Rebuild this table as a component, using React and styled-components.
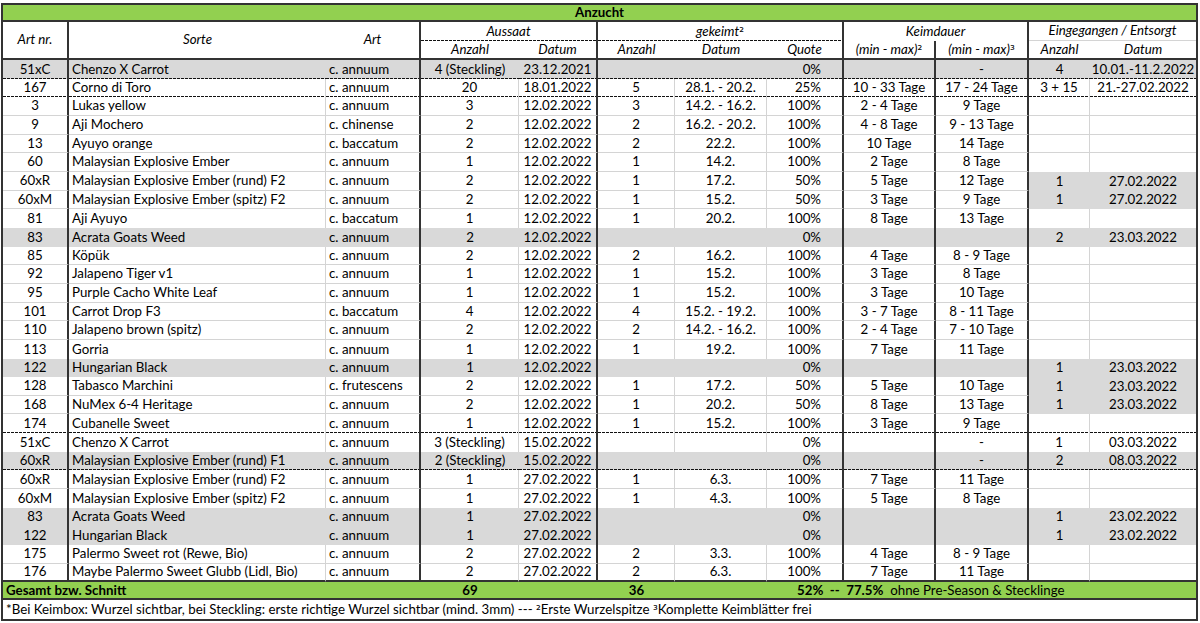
import React from "react";
import styled, { createGlobalStyle, css } from "styled-components";

const GREEN = "#92d050";
const GRAY = "#d9d9d9";
const GRID = "#d4d4d4";
const DARK = "#333333";

const GlobalStyle = createGlobalStyle`
  html, body { margin: 0; padding: 0; background: #fff; }
  body {
    font-family: Lato, "Noto Sans", "Liberation Sans", sans-serif;
    font-size: 13.3px;
    color: #000;
  }
`;

const COLS = [66, 257, 95, 98, 79, 77, 92, 77, 92, 93, 61, 106];
const RIGHT = ["dark", "light", "dark", "light", "dark", "light", "light", "dark", "dark", "dark", "light", "none"];
const ALIGN = ["center", "left", "left", "center", "center", "center", "center", "right", "center", "center", "center", "center"];

const Sheet = styled.div`
  margin: 3px 0 0 1px;
  width: 1197px;
  box-sizing: border-box;
  border: 2px solid ${DARK};
  display: grid;
  grid-template-columns: ${COLS.map((c) => `${c}px`).join(" ")};
  grid-template-rows: 17px 19px 19px repeat(28, 18.67px) 18px 19px;
`;

const justify = { left: "flex-start", center: "center", right: "flex-end" };

const lineFor = (kind) => {
  if (kind === "dark") return `2px solid ${DARK}`;
  if (kind === "light") return `1px solid ${GRID}`;
  return "0 none";
};

const Cell = styled.div`
  box-sizing: border-box;
  display: flex;
  align-items: center;
  justify-content: ${(p) => justify[p.$align || "center"]};
  padding: 0 ${(p) => (p.$padR != null ? p.$padR : 3)}px 0 ${(p) => (p.$padL != null ? p.$padL : 3)}px;
  white-space: pre;
  line-height: 1;
  min-width: 0;
  background-color: ${(p) => (p.$bg === "gray" ? GRAY : p.$bg === "green" ? GREEN : "#fff")};
  border-right: ${(p) => lineFor(p.$right)};
  border-bottom: ${(p) => lineFor(p.$bottom)};
  font-style: ${(p) => (p.$italic ? "italic" : "normal")};
  font-weight: ${(p) => (p.$bold ? 700 : 400)};
  ${(p) => p.$span && css`grid-column: span ${p.$span};`}
  ${(p) => p.$rowSpan && css`grid-row: span ${p.$rowSpan};`}
  ${(p) =>
    p.$dashed &&
    css`
      background-image: linear-gradient(to right, #111 0 3px, transparent 3px 4px);
      background-size: 4px 1px;
      background-repeat: repeat-x;
      background-position: left bottom;
    `}
`;

const Bold = styled.span`
  font-weight: 700;
`;

const Sup = styled.span`
  font-family: "DejaVu Sans", "Noto Sans", sans-serif;
  font-size: 12px;
  font-style: normal;
`;

const ROWS = [
  { v: ["51xC", "Chenzo X Carrot", "c. annuum", "4 (Steckling)", "23.12.2021", "", "", "0%", "", "-", "4", "10.01.-11.2.2022"], g: "full", b: "dashed" },
  { v: ["167", "Corno di Toro", "c. annuum", "20", "18.01.2022", "5", "28.1. - 20.2.", "25%", "10 - 33 Tage", "17 - 24 Tage", "3 + 15", "21.-27.02.2022"], b: "dashed" },
  { v: ["3", "Lukas yellow", "c. annuum", "3", "12.02.2022", "3", "14.2. - 16.2.", "100%", "2 - 4 Tage", "9 Tage", "", ""] },
  { v: ["9", "Aji Mochero", "c. chinense", "2", "12.02.2022", "2", "16.2. - 20.2.", "100%", "4 - 8 Tage", "9 - 13 Tage", "", ""] },
  { v: ["13", "Ayuyo orange", "c. baccatum", "2", "12.02.2022", "2", "22.2.", "100%", "10 Tage", "14 Tage", "", ""] },
  { v: ["60", "Malaysian Explosive Ember", "c. annuum", "1", "12.02.2022", "1", "14.2.", "100%", "2 Tage", "8 Tage", "", ""] },
  { v: ["60xR", "Malaysian Explosive Ember (rund) F2", "c. annuum", "2", "12.02.2022", "1", "17.2.", "50%", "5 Tage", "12 Tage", "1", "27.02.2022"], g: "end" },
  { v: ["60xM", "Malaysian Explosive Ember (spitz) F2", "c. annuum", "2", "12.02.2022", "1", "15.2.", "50%", "3 Tage", "9 Tage", "1", "27.02.2022"], g: "end" },
  { v: ["81", "Aji Ayuyo", "c. baccatum", "1", "12.02.2022", "1", "20.2.", "100%", "8 Tage", "13 Tage", "", ""] },
  { v: ["83", "Acrata Goats Weed", "c. annuum", "2", "12.02.2022", "", "", "0%", "", "", "2", "23.03.2022"], g: "full" },
  { v: ["85", "Köpük", "c. annuum", "2", "12.02.2022", "2", "16.2.", "100%", "4 Tage", "8 - 9 Tage", "", ""] },
  { v: ["92", "Jalapeno Tiger v1", "c. annuum", "1", "12.02.2022", "1", "15.2.", "100%", "3 Tage", "8 Tage", "", ""] },
  { v: ["95", "Purple Cacho White Leaf", "c. annuum", "1", "12.02.2022", "1", "15.2.", "100%", "3 Tage", "10 Tage", "", ""] },
  { v: ["101", "Carrot Drop F3", "c. baccatum", "4", "12.02.2022", "4", "15.2. - 19.2.", "100%", "3 - 7 Tage", "8 - 11 Tage", "", ""] },
  { v: ["110", "Jalapeno brown (spitz)", "c. annuum", "2", "12.02.2022", "2", "14.2. - 16.2.", "100%", "2 - 4 Tage", "7 - 10 Tage", "", ""] },
  { v: ["113", "Gorria", "c. annuum", "1", "12.02.2022", "1", "19.2.", "100%", "7 Tage", "11 Tage", "", ""] },
  { v: ["122", "Hungarian Black", "c. annuum", "1", "12.02.2022", "", "", "0%", "", "", "1", "23.03.2022"], g: "full" },
  { v: ["128", "Tabasco Marchini", "c. frutescens", "2", "12.02.2022", "1", "17.2.", "50%", "5 Tage", "10 Tage", "1", "23.03.2022"], g: "end" },
  { v: ["168", "NuMex 6-4 Heritage", "c. annuum", "2", "12.02.2022", "1", "20.2.", "50%", "8 Tage", "13 Tage", "1", "23.03.2022"], g: "end" },
  { v: ["174", "Cubanelle Sweet", "c. annuum", "1", "12.02.2022", "1", "15.2.", "100%", "3 Tage", "9 Tage", "", ""], b: "dashed" },
  { v: ["51xC", "Chenzo X Carrot", "c. annuum", "3 (Steckling)", "15.02.2022", "", "", "0%", "", "-", "1", "03.03.2022"] },
  { v: ["60xR", "Malaysian Explosive Ember (rund) F1", "c. annuum", "2 (Steckling)", "15.02.2022", "", "", "0%", "", "-", "2", "08.03.2022"], g: "full", b: "dashed" },
  { v: ["60xR", "Malaysian Explosive Ember (rund) F2", "c. annuum", "1", "27.02.2022", "1", "6.3.", "100%", "7 Tage", "11 Tage", "", ""] },
  { v: ["60xM", "Malaysian Explosive Ember (spitz) F2", "c. annuum", "1", "27.02.2022", "1", "4.3.", "100%", "5 Tage", "8 Tage", "", ""] },
  { v: ["83", "Acrata Goats Weed", "c. annuum", "1", "27.02.2022", "", "", "0%", "", "", "1", "23.02.2022"], g: "full" },
  { v: ["122", "Hungarian Black", "c. annuum", "1", "27.02.2022", "", "", "0%", "", "", "1", "23.02.2022"], g: "full" },
  { v: ["175", "Palermo Sweet rot (Rewe, Bio)", "c. annuum", "2", "27.02.2022", "2", "3.3.", "100%", "4 Tage", "8 - 9 Tage", "", ""] },
  { v: ["176", "Maybe Palermo Sweet Glubb (Lidl, Bio)", "c. annuum", "2", "27.02.2022", "2", "6.3.", "100%", "7 Tage", "11 Tage", "", ""] },
];

const isGray = (i, c) => {
  const r = ROWS[i];
  if (!r || c > 11) return false;
  if (r.g === "full") return true;
  if (r.g === "end") return c >= 10;
  return false;
};

function DataRow({ row, i }) {
  const last = i === ROWS.length - 1;
  return row.v.map((val, c) => {
    const gray = isGray(i, c);
    let right = RIGHT[c];
    if (right === "light" && (gray || isGray(i, c + 1))) right = "none";
    let bottom = "light";
    let dashed = false;
    if (row.b === "dashed") {
      bottom = "none";
      dashed = true;
    } else if (last) bottom = "dark";
    else if (gray || isGray(i + 1, c)) bottom = "none";
    return (
      <Cell
        key={c}
        $align={ALIGN[c]}
        $bg={gray ? "gray" : "white"}
        $right={right}
        $bottom={bottom}
        $dashed={dashed}
        $padR={c === 7 ? 21 : 3}
      >
        {val}
      </Cell>
    );
  });
}

export default function App() {
  return (
    <>
      <GlobalStyle />
      <Sheet>
        <Cell $span={12} $bg="green" $bold $bottom="dark">Anzucht</Cell>

        <Cell $rowSpan={2} $italic $right="dark" $bottom="dark">Art nr.</Cell>
        <Cell $rowSpan={2} $italic $bottom="dark">Sorte</Cell>
        <Cell $rowSpan={2} $italic $right="dark" $bottom="dark">Art</Cell>
        <Cell $span={2} $italic $right="dark" $dashed>Aussaat</Cell>
        <Cell $span={3} $italic $right="dark" $dashed>gekeimt<Sup>²</Sup></Cell>
        <Cell $span={2} $italic $right="dark">Keimdauer</Cell>
        <Cell $span={2} $italic $bottom="light">Eingegangen / Entsorgt</Cell>

        <Cell $italic $bottom="dark">Anzahl</Cell>
        <Cell $italic $right="dark" $bottom="dark">Datum</Cell>
        <Cell $italic $bottom="dark">Anzahl</Cell>
        <Cell $italic $bottom="dark">Datum</Cell>
        <Cell $italic $right="dark" $bottom="dark">Quote</Cell>
        <Cell $italic $right="dark" $bottom="dark">(min - max)<Sup>²</Sup></Cell>
        <Cell $italic $right="dark" $bottom="dark">(min - max)<Sup>³</Sup></Cell>
        <Cell $italic $bottom="dark">Anzahl</Cell>
        <Cell $italic $bottom="dark">Datum</Cell>

        {ROWS.map((row, i) => (
          <DataRow key={i} row={row} i={i} />
        ))}

        <Cell $span={3} $align="left" $bg="green" $bold $bottom="dark">Gesamt bzw. Schnitt</Cell>
        <Cell $bg="green" $bold $bottom="dark">69</Cell>
        <Cell $bg="green" $bottom="dark" />
        <Cell $bg="green" $bold $bottom="dark">36</Cell>
        <Cell $bg="green" $bottom="dark" />
        <Cell $span={5} $align="left" $bg="green" $bottom="dark" $padL={30}>
          <Bold>{"52%  --  77.5%"}</Bold>
          {"  ohne Pre-Season & Stecklinge"}
        </Cell>

        <Cell $span={12} $align="left" $padL={3}>
          {"*Bei Keimbox: Wurzel sichtbar, bei Steckling: erste richtige Wurzel sichtbar (mind. 3mm) --- "}
          <Sup>²</Sup>
          {"Erste Wurzelspitze "}
          <Sup>³</Sup>
          {"Komplette Keimblätter frei"}
        </Cell>
      </Sheet>
    </>
  );
}
